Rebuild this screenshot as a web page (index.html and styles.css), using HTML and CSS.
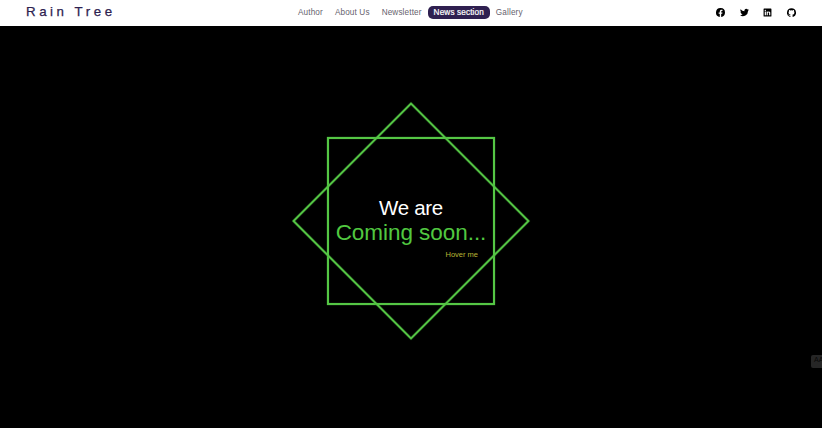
FILE: index.html
```html
<!DOCTYPE html>
<html lang="en">
<head>
<meta charset="utf-8">
<title>Rain Tree</title>
<link rel="stylesheet" href="styles.css">
</head>
<body>
<header class="header">
  <a class="logo">Rain Tree</a>
  <nav class="nav">
    <a>Author</a><a>About Us</a><a>Newsletter</a><a class="active">News section</a><a>Gallery</a>
  </nav>
  <div class="social">
    <svg viewBox="0 0 24 24"><path d="M24 12a12 12 0 1 0-13.9 11.9v-8.4H7.100V12h3V9.400c0-3 1.800-4.700 4.500-4.700 1.300 0 2.700.2 2.700.2v3h-1.500c-1.500 0-2 .9-2 1.900V12h3.400l-.6 3.500h-2.800v8.400A12 12 0 0 0 24 12z"/></svg>
    <svg viewBox="0 0 24 24"><path d="M24 4.600a10 10 0 0 1-2.800.8 5 5 0 0 0 2.200-2.700 10 10 0 0 1-3.100 1.200 4.900 4.900 0 0 0-8.400 4.500A14 14 0 0 1 1.700 3.200a4.900 4.900 0 0 0 1.500 6.500 5 5 0 0 1-2.200-.6 4.900 4.900 0 0 0 3.900 4.900 5 5 0 0 1-2.200.1 4.900 4.900 0 0 0 4.600 3.400A10 10 0 0 1 0 19.500 14 14 0 0 0 21.500 7.100 10 10 0 0 0 24 4.600z"/></svg>
    <svg viewBox="0 0 24 24"><path fill-rule="evenodd" d="M3 1.500h18A1.500 1.500 0 0 1 22.500 3v18a1.500 1.500 0 0 1-1.500 1.500H3A1.500 1.500 0 0 1 1.500 21V3A1.500 1.500 0 0 1 3 1.500zM4.700 9.500v10h3.100v-10zM6.200 4.500a1.800 1.800 0 1 0 .1 3.600 1.800 1.800 0 0 0-.1-3.600zM9.700 9.500v10h3.100v-5c0-1.400.4-2.600 1.900-2.600s1.600 1.300 1.600 2.700v4.900h3.100V14c0-2.700-.6-4.800-3.700-4.800-1.500 0-2.500.8-2.900 1.600v-1.300z"/></svg>
    <svg viewBox="0 0 24 24"><path d="M12 .6a12 12 0 0 0-3.800 23.400c.6.100.8-.3.800-.6v-2.200c-3.300.7-4-1.400-4-1.400-.6-1.400-1.400-1.800-1.400-1.800-1-.7.1-.7.1-.7 1.200.1 1.800 1.200 1.800 1.200 1.100 1.900 2.900 1.300 3.500 1 .1-.8.400-1.300.8-1.600-2.700-.3-5.500-1.300-5.500-6 0-1.300.5-2.400 1.200-3.200-.1-.3-.5-1.500.1-3.200 0 0 1-.3 3.300 1.200a11.500 11.500 0 0 1 6.200 0c2.300-1.500 3.300-1.200 3.300-1.200.6 1.700.2 2.900.1 3.200.8.800 1.200 1.900 1.200 3.200 0 4.700-2.800 5.700-5.500 6 .4.400.8 1.100.8 2.200v3.300c0 .3.200.7.800.6A12 12 0 0 0 12 .6z"/></svg>
  </div>
</header>
<main class="stage">
  <div class="star">
    <div class="copy">
      <h1>We are</h1>
      <h2>Coming soon...</h2>
      <p>Hover me</p>
    </div>
  </div>
  <span class="badge">AA</span>
</main>
</body>
</html>
```
FILE: styles.css
```css
* { box-sizing: border-box; }
body {
  margin: 0;
  height: 428px;
  display: flex;
  flex-direction: column;
  overflow: hidden;
  background: #000;
  font-family: "Liberation Sans", Arial, sans-serif;
}
.header {
  height: 26px;
  flex: none;
  display: grid;
  grid-template-columns: 266px 1fr 80px;
  align-items: center;
  padding: 0 26px 2px;
  background: #fff;
}
.logo {
  color: #2d2150;
  font: 13.300px/16px "Liberation Sans", Arial, sans-serif;
  letter-spacing: 3.550px;
  -webkit-text-stroke: 0.25px #2d2150;
  white-space: nowrap;
}
.nav { display: flex; }
.nav a {
  padding: 0 6px;
  border-radius: 5px;
  color: #665f6d;
  font-size: 8.2px;
  letter-spacing: 0.13px;
  line-height: 13px;
  white-space: nowrap;
}
.nav .active {
  background: #2f2050;
  color: #fff;
  -webkit-text-stroke: 0.2px #fff;
}
.social { display: flex; justify-content: space-between; }
.social svg { width: 9px; height: 9px; fill: #000; }
.stage {
  position: relative;
  flex: 1;
  display: flex;
  justify-content: center;
  align-items: flex-start;
  padding-top: 111px;
}
.star {
  position: relative;
  width: 168px;
  height: 168px;
  border: 2px solid #55c645;
  box-shadow: 0 0 1px #3f9a34, inset 0 0 1px #3f9a34;
}
.star::before {
  content: "";
  position: absolute;
  inset: -2px;
  border: 2px solid #55c645;
  box-shadow: 0 0 1px #3f9a34, inset 0 0 1px #3f9a34;
  transform: rotate(45deg);
}
.copy {
  position: relative;
  display: flex;
  flex-direction: column;
  align-items: center;
  padding-top: 57px;
  white-space: nowrap;
}
h1, h2, p { margin: 0; font-weight: 400; }
h1 {
  color: #fff;
  font-size: 20.500px;
  letter-spacing: -0.3px;
  line-height: 24px;
}
h2 {
  color: #51c840;
  font-size: 22.500px;
  letter-spacing: -0.05px;
  line-height: 26px;
}
p {
  align-self: flex-end;
  margin-right: 15px;
  color: #b8b535;
  font-size: 7.500px;
  line-height: 18px;
}
.badge {
  position: absolute;
  left: 811px;
  top: 329px;
  width: 14px;
  height: 13px;
  padding-left: 3px;
  border-radius: 2px;
  background: #262626;
  color: #080808;
  font-size: 7px;
  line-height: 10px;
}
```
